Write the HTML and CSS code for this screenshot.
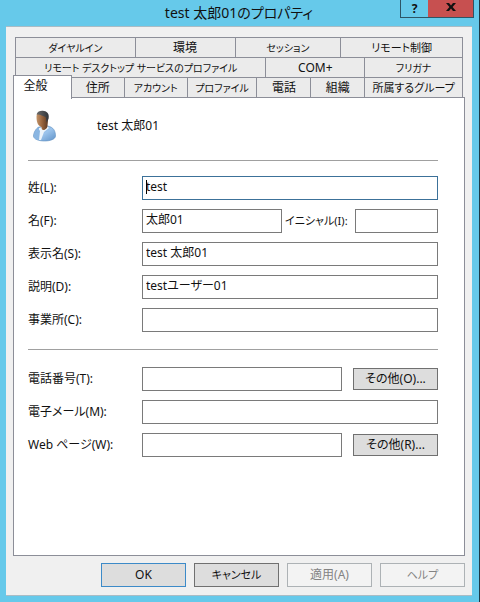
FILE: index.html
```
<!DOCTYPE html>
<html lang="ja">
<head>
    <meta charset="UTF-8">
    <meta name="viewport" content="width=device-width, initial-scale=1.0">
    <title>test 太郎01のプロパティ</title>
    <link rel="stylesheet" href="styles.css">
</head>
<body>
    <div class="window">
        <header class="titlebar">
            <h1>test 太郎01のプロパティ</h1>
            <div class="window-buttons">
                <button type="button" class="help-button" aria-label="ヘルプ">?</button>
                <button type="button" class="close-button" aria-label="閉じる">
                    <svg width="10" height="8" viewBox="0 0 10 8"><path d="M0 0h3l2 2.4L7 0h3L6.6 4 10 8H7L5 5.6 3 8H0l3.4-4z" fill="#111"/></svg>
                </button>
            </div>
        </header>

        <main class="dialog">
            <!-- Tabs -->
            <nav class="tabs">
                <div class="tab-row tab-row-top">
                    <button type="button" class="kana">ダイヤルイン</button>
                    <button type="button">環境</button>
                    <button type="button" class="kana">セッション</button>
                    <button type="button" class="mixed">リモート制御</button>
                </div>
                <div class="tab-row tab-row-middle">
                    <button type="button" class="kana">リモート デスクトップ サービスのプロファイル</button>
                    <button type="button">COM+</button>
                    <button type="button" class="kana">フリガナ</button>
                </div>
                <div class="tab-row tab-row-bottom">
                    <button type="button" class="selected">全般</button>
                    <button type="button">住所</button>
                    <button type="button" class="kana">アカウント</button>
                    <button type="button" class="kana">プロファイル</button>
                    <button type="button">電話</button>
                    <button type="button">組織</button>
                    <button type="button" class="mixed">所属するグループ</button>
                </div>
            </nav>

            <!-- General tab -->
            <form class="panel" id="generalForm">
                <div class="user">
                    <svg width="24" height="32" viewBox="0 0 24 32">
                        <defs>
                            <linearGradient id="skin" x1="0" x2="1">
                                <stop offset="0" stop-color="#c49468"/>
                                <stop offset="0.5" stop-color="#96633d"/>
                                <stop offset="1" stop-color="#5d3a24"/>
                            </linearGradient>
                            <linearGradient id="shirt" x1="0" y1="0" x2="1" y2="1">
                                <stop offset="0" stop-color="#6fa3d6"/>
                                <stop offset="0.5" stop-color="#9cc4ec"/>
                                <stop offset="1" stop-color="#5f92c8"/>
                            </linearGradient>
                            <linearGradient id="hair" x1="0" x2="1">
                                <stop offset="0" stop-color="#6b6b6b"/>
                                <stop offset="1" stop-color="#303338"/>
                            </linearGradient>
                        </defs>
                        <path d="M6 17c-3 1-5.500 6-5.500 9 0 3 5 5 11 5s11-2 11-5c0-5-2-9-8-10z" fill="url(#shirt)" stroke="#5f8fbf" stroke-width="0.600"/>
                        <path d="M6 18l8-2 2 2-5 4-3 8H6c-1-4-1-8 0-12z" fill="#edf4fa"/>
                        <path d="M5 18l2 3-1 9c-3-.5-5-2-5-4 0-3 1-6 4-8z" fill="#8ab6e2"/>
                        <path d="M3.500 7c0-4 2.500-5 5.500-5s6 2 6 7c0 3-.5 5-.5 7 0 2-2.500 4-4 4s-2-1-2-3c-3-1-5-4-5-10z" fill="url(#skin)"/>
                        <path d="M3.500 4.500c1-3.500 4.500-4 7.500-3.500 4 .5 5.500 4 4.500 8l-2 3.500c-.5-2 0-4-1-5.500-3-1-5-3-9-2.500z" fill="url(#hair)"/>
                    </svg>
                    <span>test 太郎01</span>
                </div>

                <div class="fields">
                    <label for="lastName">姓(L):</label>
                    <div class="field focused"><input type="text" id="lastName" value="test"></div>

                    <label for="firstName">名(F):</label>
                    <div class="field">
                        <input type="text" id="firstName" value="太郎01">
                        <label for="initials" class="initials-label">イニシャル(I):</label>
                        <input type="text" id="initials" class="initials">
                    </div>

                    <label for="displayName">表示名(S):</label>
                    <div class="field"><input type="text" id="displayName" value="test 太郎01"></div>

                    <label for="description">説明(D):</label>
                    <div class="field"><input type="text" id="description" value="testユーザー01"></div>

                    <label for="office">事業所(C):</label>
                    <div class="field"><input type="text" id="office"></div>
                </div>

                <div class="fields contact">
                    <label for="phone">電話番号(T):</label>
                    <div class="field">
                        <input type="text" id="phone">
                        <button type="button" class="other">その他(O)...</button>
                    </div>

                    <label for="email">電子メール(M):</label>
                    <div class="field"><input type="text" id="email"></div>

                    <label for="webPage">Web ページ(W):</label>
                    <div class="field">
                        <input type="text" id="webPage">
                        <button type="button" class="other">その他(R)...</button>
                    </div>
                </div>
            </form>

            <footer class="actions">
                <button type="submit" form="generalForm" class="default">OK</button>
                <button type="button" class="mixed">キャンセル</button>
                <button type="button" disabled>適用(A)</button>
                <button type="button" class="mixed" disabled>ヘルプ</button>
            </footer>
        </main>
    </div>
</body>
</html>
```
FILE: styles.css
```
* {
    box-sizing: border-box;
}

body {
    margin: 0;
    font-family: "Noto Sans", "Noto Sans CJK JP", sans-serif;
    font-size: 12px;
    line-height: 16px;
    font-feature-settings: "palt";
    color: #111;
}

button, input {
    font: inherit;
    font-feature-settings: inherit;
    color: inherit;
    margin: 0;
    border-radius: 0;
}

button {
    padding: 0;
    white-space: nowrap;
}

/* Window frame */
.window {
    display: flex;
    flex-direction: column;
    min-height: 100vh;
    padding: 0 7px 6px 6px;
    background: #66c9ea;
    border-right: 1px solid #1c3a48;
}

.titlebar {
    position: relative;
    height: 26px;
}

.titlebar h1 {
    margin: 0;
    font-size: 14px;
    font-weight: normal;
    line-height: 26px;
    text-align: center;
}

.window-buttons {
    position: absolute;
    top: 0;
    right: -2px;
    display: flex;
    height: 18px;
    border: 1px solid #2d5566;
    border-top: none;
}

.window-buttons button {
    display: flex;
    align-items: center;
    justify-content: center;
    border: none;
}

.window-buttons .help-button {
    width: 27px;
    background: #66c9ea;
    font-weight: bold;
}

.window-buttons .close-button {
    width: 45px;
    background: #c75050;
    padding-bottom: 3px;
}

.dialog {
    flex: 1;
    display: flex;
    flex-direction: column;
    padding: 10px 7px 8px;
    background: #f0f0f0;
    border-top: 1px solid #a9bcc5;
    border-bottom: 1px solid #a9bcc5;
}

/* Tabs */
.tabs {
    padding: 0 2px;
}

.tab-row {
    display: grid;
    border-left: 1px solid #8c8e98;
}

.tab-row-top {
    grid-template-columns: 120fr 100fr 106fr 122fr;
}

.tab-row-middle {
    grid-template-columns: 251fr 99fr 98fr;
}

.tab-row-bottom {
    grid-template-columns: 56fr 53fr 63fr 70fr 54fr 54fr 98fr;
}

.tab-row button {
    height: 20px;
    min-width: 0;
    background: #ebebeb;
    border: 1px solid #8c8e98;
    border-left: none;
    border-bottom: none;
}

.tab-row .selected {
    position: relative;
    height: 24px;
    margin: -2px 0 -2px -3px;
    padding: 0 14px 3px 0;
    background: #fff;
    border-left: 1px solid #8c8e98;
}

.kana {
    font-size: 10px;
}

.mixed {
    font-size: 11px;
}

/* Panel */
.panel {
    flex: 1;
    padding: 12px 26px 9px 14px;
    background: #fff;
    border: 1px solid #8c8e98;
}

.user {
    display: flex;
    align-items: center;
    gap: 40px;
    padding: 0 0 18px 5px;
}

.fields {
    display: grid;
    grid-template-columns: 114px minmax(0, 1fr);
    align-items: center;
    row-gap: 9px;
    padding: 15px 0 17px;
    border-top: 1px solid #a0a0a0;
}

.contact {
    padding-top: 17px;
}

.field {
    position: relative;
    display: flex;
    align-items: center;
}

.field input {
    flex: 1;
    min-width: 0;
    height: 24px;
    padding: 0 3px 4px;
    background: #fff;
    border: 1px solid #7a7a7a;
    outline: none;
}

.focused input {
    border-color: #3c7199;
}

/* Text cursor */
.focused::after {
    content: "";
    position: absolute;
    top: 4px;
    left: 4px;
    width: 1px;
    height: 14px;
    background: #000;
}

.initials-label {
    width: 73px;
    padding-left: 3px;
    font-size: 11px;
    white-space: nowrap;
}

.field .initials {
    flex: none;
    width: 83px;
}

.other,
.actions button {
    width: 85px;
    height: 24px;
    background: #ddd;
    border: 1px solid #707070;
}

.field .other {
    height: 22px;
    margin-left: 11px;
}

/* Bottom buttons */
.actions {
    display: flex;
    justify-content: flex-end;
    gap: 8px;
    padding-top: 7px;
}

.actions .default {
    border-color: #3c8ac8;
}

.actions button:disabled {
    background: #f3f3f3;
    border-color: #adb2b5;
    color: #838383;
}
```
